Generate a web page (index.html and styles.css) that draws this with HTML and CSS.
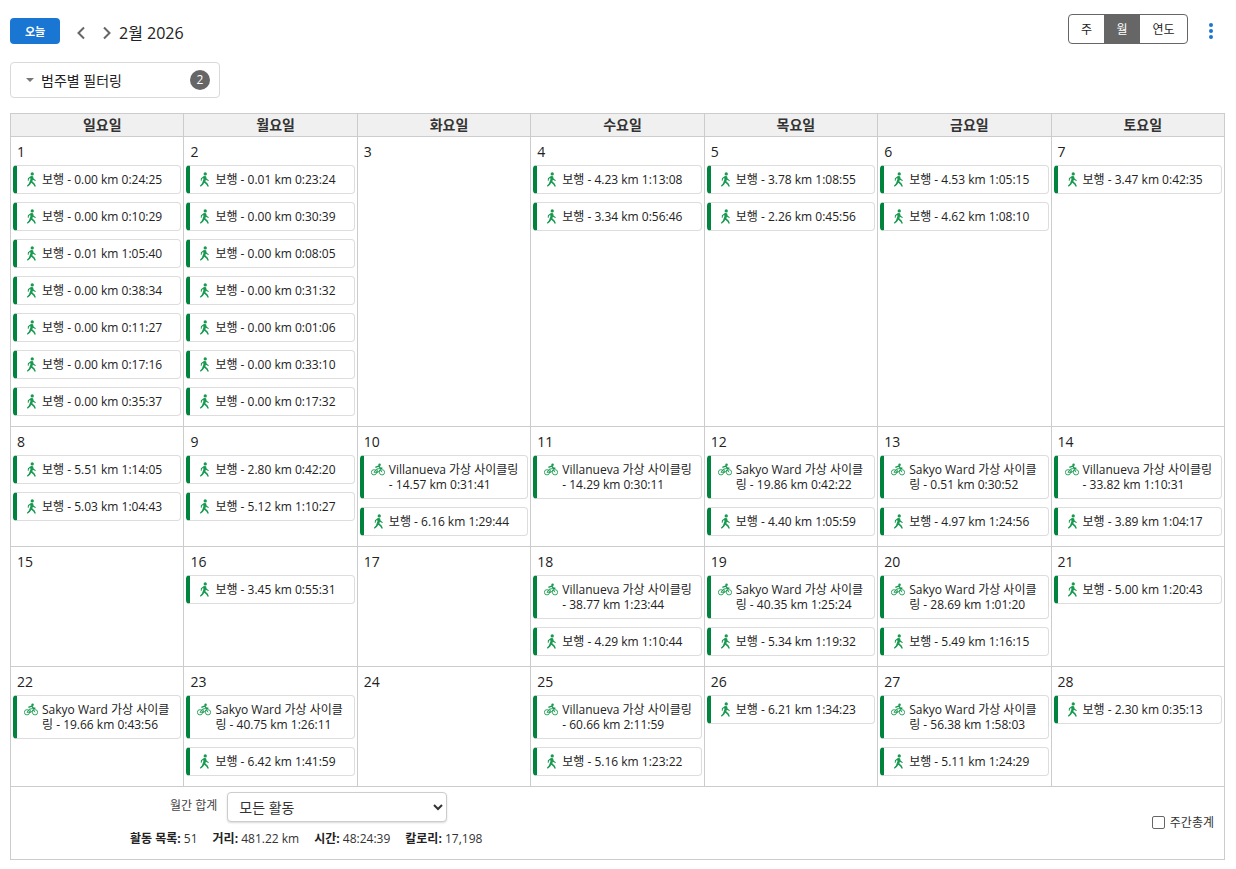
FILE: index.html
```html
<!DOCTYPE html>
<html lang="ko">
<head>
<meta charset="utf-8">
<title>캘린더</title>
<link rel="stylesheet" href="styles.css">
</head>
<body>
<svg class="defs" width="0" height="0" aria-hidden="true">
  <symbol id="walk" viewBox="0 0 12 16">
    <circle cx="6.8" cy="1.9" r="1.8" fill="currentColor"/>
    <path d="M5.4 4.2 L7.7 4.4 L8.4 7.2 L10.8 8.8 L10.2 9.7 L7.4 8.3 L7 10.2 L9.4 12.4 L10.8 15.4 L9.5 16 L8 13.4 L5.8 11.6 L4.4 13.6 L1.8 15.8 L1 14.8 L3.2 12.4 L4.8 8 L4.6 6 L3.2 7.4 L2.9 9.4 L1.9 9.3 L2.1 6.7 Z" fill="currentColor"/>
  </symbol>
  <symbol id="bike" viewBox="0 0 16 14">
    <circle cx="3.4" cy="10.2" r="3" fill="none" stroke="currentColor" stroke-width="1"/>
    <circle cx="12.6" cy="10.2" r="3" fill="none" stroke="currentColor" stroke-width="1"/>
    <path d="M3.4 10.2 L6.4 6.4 L8 10.2 L3.4 10.2 M6.4 6.4 L10 6 L12.6 10.2 M8 10.2 L10.4 7.4" fill="none" stroke="currentColor" stroke-width="1"/>
    <circle cx="9.8" cy="1.5" r="1.4" fill="currentColor"/>
    <path d="M5 4.6 L8.8 3.2 L10.8 5.6 L13 5.6" fill="none" stroke="currentColor" stroke-width="1.6"/>
  </symbol>
</svg>

<main class="page">
  <header class="toolbar">
    <button class="today">오늘</button>
    <button class="nav" aria-label="이전"><svg width="10" height="14" viewBox="0 0 10 14"><path d="M8 1.5 L2.5 7 L8 12.5" fill="none" stroke="#666" stroke-width="2"/></svg></button>
    <button class="nav" aria-label="다음"><svg width="10" height="14" viewBox="0 0 10 14"><path d="M3 1.5 L8.5 7 L3 12.5" fill="none" stroke="#666" stroke-width="2"/></svg></button>
    <h1 class="title">2월 2026</h1>
    <div class="views">
      <button class="view v-week">주</button>
      <button class="view v-month active">월</button>
      <button class="view v-year">연도</button>
    </div>
    <button class="more" aria-label="더보기"><span></span><span></span><span></span></button>
  </header>

  <div class="filter">
    <span class="caret"></span>
    <span class="filter-label">범주별 필터링</span>
    <span class="badge">2</span>
  </div>

  <section class="calendar">
    <div class="dow">일요일</div><div class="dow">월요일</div><div class="dow">화요일</div><div class="dow">수요일</div><div class="dow">목요일</div><div class="dow">금요일</div><div class="dow">토요일</div>

    <div class="day"><div class="num">1</div>
      <a class="ev"><svg class="ic"><use href="#walk"/></svg><span>보행 - 0.00 km 0:24:25</span></a>
      <a class="ev"><svg class="ic"><use href="#walk"/></svg><span>보행 - 0.00 km 0:10:29</span></a>
      <a class="ev"><svg class="ic"><use href="#walk"/></svg><span>보행 - 0.01 km 1:05:40</span></a>
      <a class="ev"><svg class="ic"><use href="#walk"/></svg><span>보행 - 0.00 km 0:38:34</span></a>
      <a class="ev"><svg class="ic"><use href="#walk"/></svg><span>보행 - 0.00 km 0:11:27</span></a>
      <a class="ev"><svg class="ic"><use href="#walk"/></svg><span>보행 - 0.00 km 0:17:16</span></a>
      <a class="ev"><svg class="ic"><use href="#walk"/></svg><span>보행 - 0.00 km 0:35:37</span></a>
    </div>
    <div class="day"><div class="num">2</div>
      <a class="ev"><svg class="ic"><use href="#walk"/></svg><span>보행 - 0.01 km 0:23:24</span></a>
      <a class="ev"><svg class="ic"><use href="#walk"/></svg><span>보행 - 0.00 km 0:30:39</span></a>
      <a class="ev"><svg class="ic"><use href="#walk"/></svg><span>보행 - 0.00 km 0:08:05</span></a>
      <a class="ev"><svg class="ic"><use href="#walk"/></svg><span>보행 - 0.00 km 0:31:32</span></a>
      <a class="ev"><svg class="ic"><use href="#walk"/></svg><span>보행 - 0.00 km 0:01:06</span></a>
      <a class="ev"><svg class="ic"><use href="#walk"/></svg><span>보행 - 0.00 km 0:33:10</span></a>
      <a class="ev"><svg class="ic"><use href="#walk"/></svg><span>보행 - 0.00 km 0:17:32</span></a>
    </div>
    <div class="day"><div class="num">3</div></div>
    <div class="day"><div class="num">4</div>
      <a class="ev"><svg class="ic"><use href="#walk"/></svg><span>보행 - 4.23 km 1:13:08</span></a>
      <a class="ev"><svg class="ic"><use href="#walk"/></svg><span>보행 - 3.34 km 0:56:46</span></a>
    </div>
    <div class="day"><div class="num">5</div>
      <a class="ev"><svg class="ic"><use href="#walk"/></svg><span>보행 - 3.78 km 1:08:55</span></a>
      <a class="ev"><svg class="ic"><use href="#walk"/></svg><span>보행 - 2.26 km 0:45:56</span></a>
    </div>
    <div class="day"><div class="num">6</div>
      <a class="ev"><svg class="ic"><use href="#walk"/></svg><span>보행 - 4.53 km 1:05:15</span></a>
      <a class="ev"><svg class="ic"><use href="#walk"/></svg><span>보행 - 4.62 km 1:08:10</span></a>
    </div>
    <div class="day"><div class="num">7</div>
      <a class="ev"><svg class="ic"><use href="#walk"/></svg><span>보행 - 3.47 km 0:42:35</span></a>
    </div>

    <div class="day"><div class="num">8</div>
      <a class="ev"><svg class="ic"><use href="#walk"/></svg><span>보행 - 5.51 km 1:14:05</span></a>
      <a class="ev"><svg class="ic"><use href="#walk"/></svg><span>보행 - 5.03 km 1:04:43</span></a>
    </div>
    <div class="day"><div class="num">9</div>
      <a class="ev"><svg class="ic"><use href="#walk"/></svg><span>보행 - 2.80 km 0:42:20</span></a>
      <a class="ev"><svg class="ic"><use href="#walk"/></svg><span>보행 - 5.12 km 1:10:27</span></a>
    </div>
    <div class="day"><div class="num">10</div>
      <a class="ev"><svg class="ic bk"><use href="#bike"/></svg><span>Villanueva 가상 사이클링 - 14.57 km 0:31:41</span></a>
      <a class="ev"><svg class="ic"><use href="#walk"/></svg><span>보행 - 6.16 km 1:29:44</span></a>
    </div>
    <div class="day"><div class="num">11</div>
      <a class="ev"><svg class="ic bk"><use href="#bike"/></svg><span>Villanueva 가상 사이클링 - 14.29 km 0:30:11</span></a>
    </div>
    <div class="day"><div class="num">12</div>
      <a class="ev"><svg class="ic bk"><use href="#bike"/></svg><span>Sakyo Ward 가상 사이클링 - 19.86 km 0:42:22</span></a>
      <a class="ev"><svg class="ic"><use href="#walk"/></svg><span>보행 - 4.40 km 1:05:59</span></a>
    </div>
    <div class="day"><div class="num">13</div>
      <a class="ev"><svg class="ic bk"><use href="#bike"/></svg><span>Sakyo Ward 가상 사이클링 - 0.51 km 0:30:52</span></a>
      <a class="ev"><svg class="ic"><use href="#walk"/></svg><span>보행 - 4.97 km 1:24:56</span></a>
    </div>
    <div class="day"><div class="num">14</div>
      <a class="ev"><svg class="ic bk"><use href="#bike"/></svg><span>Villanueva 가상 사이클링 - 33.82 km 1:10:31</span></a>
      <a class="ev"><svg class="ic"><use href="#walk"/></svg><span>보행 - 3.89 km 1:04:17</span></a>
    </div>

    <div class="day"><div class="num">15</div></div>
    <div class="day"><div class="num">16</div>
      <a class="ev"><svg class="ic"><use href="#walk"/></svg><span>보행 - 3.45 km 0:55:31</span></a>
    </div>
    <div class="day"><div class="num">17</div></div>
    <div class="day"><div class="num">18</div>
      <a class="ev"><svg class="ic bk"><use href="#bike"/></svg><span>Villanueva 가상 사이클링 - 38.77 km 1:23:44</span></a>
      <a class="ev"><svg class="ic"><use href="#walk"/></svg><span>보행 - 4.29 km 1:10:44</span></a>
    </div>
    <div class="day"><div class="num">19</div>
      <a class="ev"><svg class="ic bk"><use href="#bike"/></svg><span>Sakyo Ward 가상 사이클링 - 40.35 km 1:25:24</span></a>
      <a class="ev"><svg class="ic"><use href="#walk"/></svg><span>보행 - 5.34 km 1:19:32</span></a>
    </div>
    <div class="day"><div class="num">20</div>
      <a class="ev"><svg class="ic bk"><use href="#bike"/></svg><span>Sakyo Ward 가상 사이클링 - 28.69 km 1:01:20</span></a>
      <a class="ev"><svg class="ic"><use href="#walk"/></svg><span>보행 - 5.49 km 1:16:15</span></a>
    </div>
    <div class="day"><div class="num">21</div>
      <a class="ev"><svg class="ic"><use href="#walk"/></svg><span>보행 - 5.00 km 1:20:43</span></a>
    </div>

    <div class="day"><div class="num">22</div>
      <a class="ev"><svg class="ic bk"><use href="#bike"/></svg><span>Sakyo Ward 가상 사이클링 - 19.66 km 0:43:56</span></a>
    </div>
    <div class="day"><div class="num">23</div>
      <a class="ev"><svg class="ic bk"><use href="#bike"/></svg><span>Sakyo Ward 가상 사이클링 - 40.75 km 1:26:11</span></a>
      <a class="ev"><svg class="ic"><use href="#walk"/></svg><span>보행 - 6.42 km 1:41:59</span></a>
    </div>
    <div class="day"><div class="num">24</div></div>
    <div class="day"><div class="num">25</div>
      <a class="ev"><svg class="ic bk"><use href="#bike"/></svg><span>Villanueva 가상 사이클링 - 60.66 km 2:11:59</span></a>
      <a class="ev"><svg class="ic"><use href="#walk"/></svg><span>보행 - 5.16 km 1:23:22</span></a>
    </div>
    <div class="day"><div class="num">26</div>
      <a class="ev"><svg class="ic"><use href="#walk"/></svg><span>보행 - 6.21 km 1:34:23</span></a>
    </div>
    <div class="day"><div class="num">27</div>
      <a class="ev"><svg class="ic bk"><use href="#bike"/></svg><span>Sakyo Ward 가상 사이클링 - 56.38 km 1:58:03</span></a>
      <a class="ev"><svg class="ic"><use href="#walk"/></svg><span>보행 - 5.11 km 1:24:29</span></a>
    </div>
    <div class="day"><div class="num">28</div>
      <a class="ev"><svg class="ic"><use href="#walk"/></svg><span>보행 - 2.30 km 0:35:13</span></a>
    </div>
  </section>

  <footer class="totals">
    <div class="totals-main">
      <div class="total-select">
        <label class="total-label" for="kind">월간 합계</label>
        <select id="kind" class="kind"><option>모든 활동</option></select>
      </div>
      <div class="stats">
        <span><b>활동 목록:</b> 51</span>
        <span><b>거리:</b> 481.22 km</span>
        <span><b>시간:</b> 48:24:39</span>
        <span><b>칼로리:</b> 17,198</span>
      </div>
    </div>
    <label class="weekly"><span class="box"></span>주간총계</label>
  </footer>
</main>
</body>
</html>
```

FILE: styles.css
```css
* { box-sizing: border-box; }
html, body { margin: 0; padding: 0; }
body {
  background: #fff;
  color: #222;
  font-family: "Open Sans", "Noto Sans CJK KR", sans-serif;
  font-size: 12px;
}
.defs { position: absolute; }
button { font-family: inherit; padding: 0; border: 0; background: none; cursor: pointer; }

.page { padding: 14px 11px 0 10px; }

.toolbar { display: flex; align-items: flex-start; height: 48px; }
.today {
  width: 50px; height: 26px; margin-top: 4px;
  background: #1976d2; color: #fff; border-radius: 4px;
  font-size: 11px; font-weight: 600;
}
.nav { width: 25px; height: 26px; margin-top: 6px; display: flex; align-items: center; justify-content: center; }
.today + .nav { margin-left: 8px; }
.title { margin: 6px 0 0 1px; font-size: 16px; font-weight: 400; line-height: 26px; color: #222; }
.views {
  margin-left: auto; display: flex; width: 120px; height: 30px;
  border: 1px solid #666; border-radius: 4px; overflow: hidden;
}
.view { font-size: 12px; color: #222; height: 100%; }
.v-week { width: 35px; }
.v-month { width: 36px; }
.v-year { flex: 1; }
.view.active { background: #666; color: #fff; }
.more {
  width: 6px; margin: 9px 10px 0 21px;
  display: flex; flex-direction: column; gap: 2px;
}
.more span { display: block; width: 4px; height: 4px; border-radius: 50%; background: #1976d2; }

.filter {
  width: 210px; height: 36px; display: flex; align-items: center;
  border: 1px solid #d9d9d9; border-radius: 4px;
  padding: 0 9px 0 15px;
}
.caret { width: 0; height: 0; border: 4.5px solid transparent; border-top: 4.5px solid #777; border-bottom: 0; }
.filter-label { margin-left: 7px; padding-top: 2px; font-size: 14px; line-height: 18px; color: #222; }
.badge {
  margin-left: auto; width: 20px; height: 20px; border-radius: 50%;
  background: #666; color: #fff; font-size: 12px; line-height: 20px; text-align: center;
}

.calendar {
  margin-top: 15px;
  display: grid; grid-template-columns: repeat(7, 1fr);
  border-top: 1px solid #ccc; border-right: 1px solid #ccc;
}
.dow {
  height: 23px; background: #f0f0f0; border-left: 1px solid #ccc; border-bottom: 1px solid #ccc;
  padding-left: 10px;
  text-align: center; font-size: 14px; font-weight: 700; line-height: 22px; color: #333;
}
.day { border-left: 1px solid #ccc; border-bottom: 1px solid #ccc; padding: 0 2px 2px; }
.num { height: 28px; padding: 5px 0 0 4px; font-size: 14px; line-height: 20px; color: #222; }
.ev {
  display: flex; margin-bottom: 8.5px; min-height: 28.5px;
  border: 1px solid #ddd; border-left: 4px solid #00843d; border-radius: 4px;
  padding: 5.75px 4px 5.75px 6px;
  font-size: 12px; line-height: 15px; color: #222;
}
.ic { flex: none; width: 11px; height: 15px; margin-right: 5px; margin-left: 3px; color: #17994f; }
.ic.bk { width: 14px; height: 15px; margin-left: 1px; margin-right: 4px; }

.totals {
  height: 73px; display: flex; align-items: center;
  border: 1px solid #ccc; border-top: 0;
  padding: 0 10px 2px 0;
}
.totals-main { margin-left: 119px; align-self: flex-start; }
.total-select { display: flex; align-items: center; margin: 5px 0 0 40px; }
.total-label { margin-right: 10px; font-size: 12px; color: #444; position: relative; top: -2px; }
.kind {
  width: 220px; height: 30px; padding: 0 7px;
  font-family: inherit; font-size: 14px; color: #333;
  background: #fff; border: 1px solid #ccc; border-radius: 4px;
  box-shadow: 0 1px 2px rgba(0,0,0,.15);
}
.stats { display: flex; gap: 15px; margin-top: 8px; font-size: 12px; line-height: 18px; color: #333; }
.stats b { font-weight: 700; color: #222; }
.weekly { margin-left: auto; display: flex; align-items: center; font-size: 12px; color: #333; }
.box { width: 13px; height: 13px; margin-right: 5px; border: 1px solid #666; border-radius: 2px; background: #fff; }
```
